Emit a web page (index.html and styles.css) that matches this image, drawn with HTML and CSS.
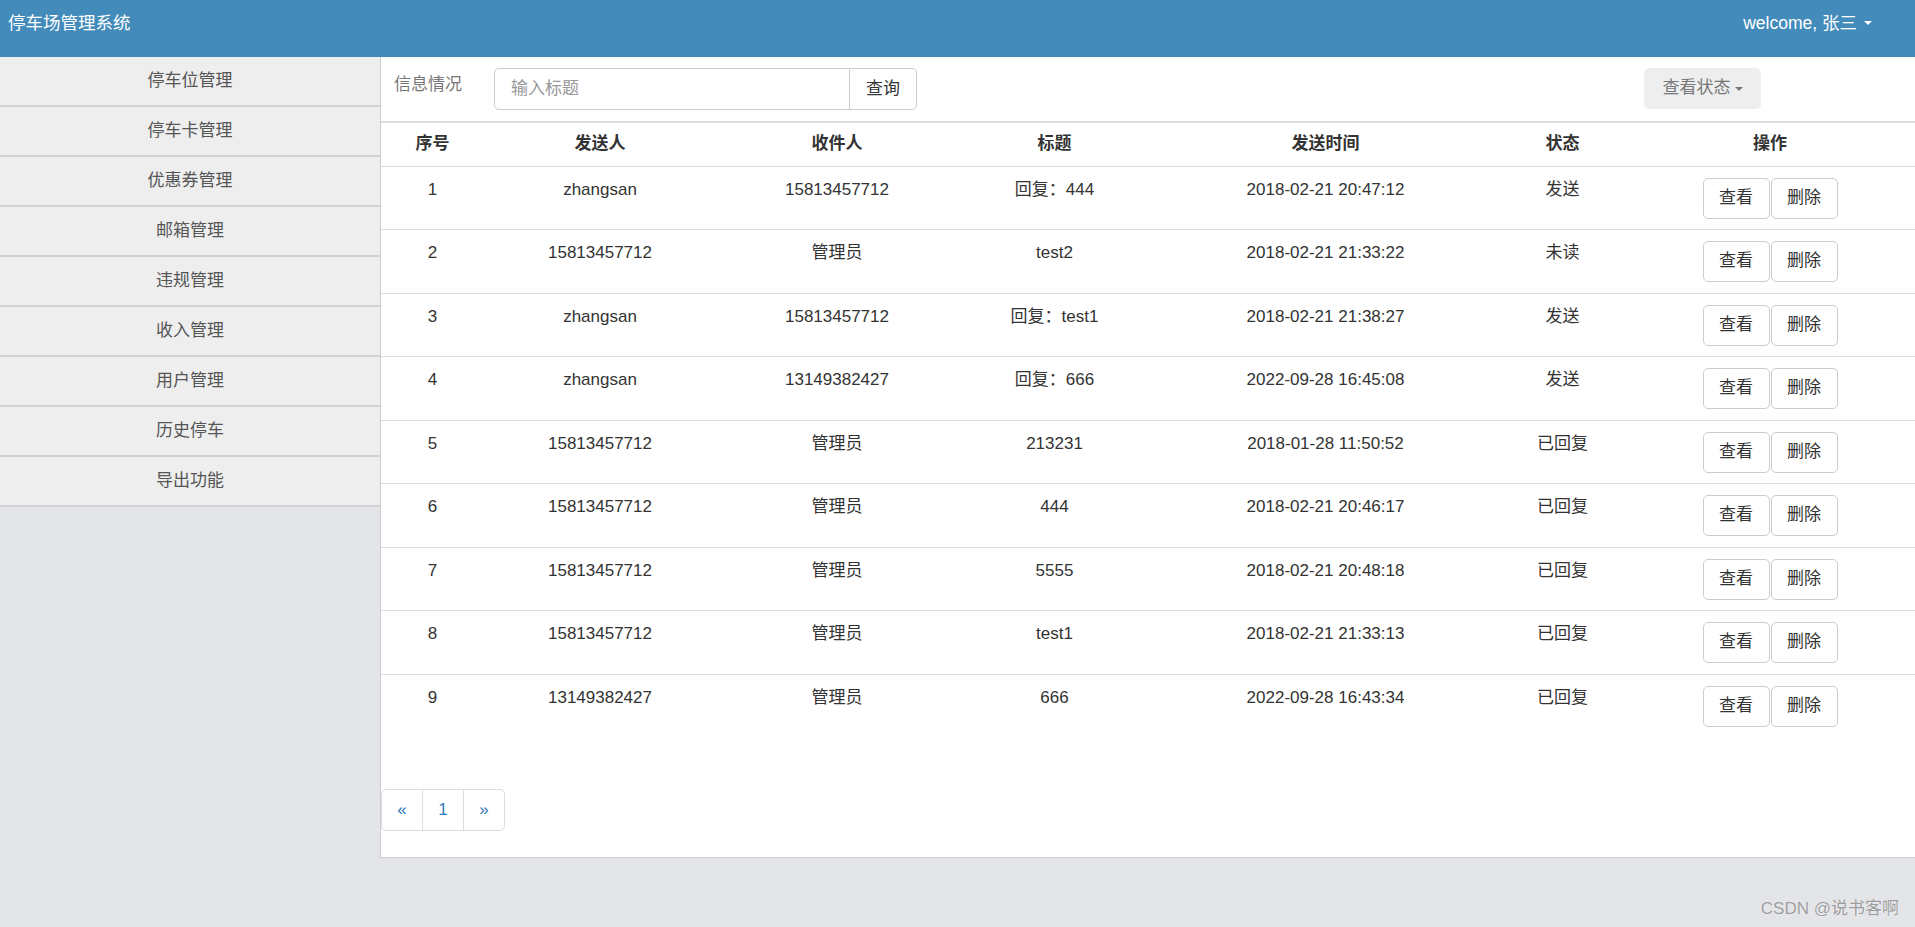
FILE: index.html
```html
<!DOCTYPE html>
<html lang="zh-CN">
<head>
<meta charset="utf-8">
<title>停车场管理系统</title>
<link rel="stylesheet" href="styles.css">
</head>
<body>
<header class="topbar">
  <div class="brand">停车场管理系统</div>
  <div class="user">welcome, 张三 <span class="caret caret-white"></span></div>
</header>
<div class="layout">
  <nav class="sidebar">
    <a class="side-item">停车位管理</a>
    <a class="side-item">停车卡管理</a>
    <a class="side-item">优惠券管理</a>
    <a class="side-item">邮箱管理</a>
    <a class="side-item">违规管理</a>
    <a class="side-item">收入管理</a>
    <a class="side-item">用户管理</a>
    <a class="side-item">历史停车</a>
    <a class="side-item">导出功能</a>
  </nav>
  <main class="panel">
    <div class="toolbar">
      <span class="label">信息情况</span>
      <div class="search">
        <input class="search-input" type="text" placeholder="输入标题">
        <button class="search-btn">查询</button>
      </div>
      <button class="status-btn">查看状态<span class="caret caret-gray"></span></button>
    </div>
    <table class="grid">
      <colgroup>
        <col class="c1"><col class="c2"><col class="c3"><col class="c4"><col class="c5"><col class="c6"><col class="c7">
      </colgroup>
      <thead>
        <tr><th>序号</th><th>发送人</th><th>收件人</th><th>标题</th><th>发送时间</th><th>状态</th><th>操作</th></tr>
      </thead>
      <tbody>
        <tr><td>1</td><td>zhangsan</td><td>15813457712</td><td>回复：444</td><td>2018-02-21 20:47:12</td><td>发送</td><td><div class="ops"><button class="op">查看</button><button class="op">删除</button></div></td></tr>
        <tr><td>2</td><td>15813457712</td><td>管理员</td><td>test2</td><td>2018-02-21 21:33:22</td><td>未读</td><td><div class="ops"><button class="op">查看</button><button class="op">删除</button></div></td></tr>
        <tr><td>3</td><td>zhangsan</td><td>15813457712</td><td>回复：test1</td><td>2018-02-21 21:38:27</td><td>发送</td><td><div class="ops"><button class="op">查看</button><button class="op">删除</button></div></td></tr>
        <tr><td>4</td><td>zhangsan</td><td>13149382427</td><td>回复：666</td><td>2022-09-28 16:45:08</td><td>发送</td><td><div class="ops"><button class="op">查看</button><button class="op">删除</button></div></td></tr>
        <tr><td>5</td><td>15813457712</td><td>管理员</td><td>213231</td><td>2018-01-28 11:50:52</td><td>已回复</td><td><div class="ops"><button class="op">查看</button><button class="op">删除</button></div></td></tr>
        <tr><td>6</td><td>15813457712</td><td>管理员</td><td>444</td><td>2018-02-21 20:46:17</td><td>已回复</td><td><div class="ops"><button class="op">查看</button><button class="op">删除</button></div></td></tr>
        <tr><td>7</td><td>15813457712</td><td>管理员</td><td>5555</td><td>2018-02-21 20:48:18</td><td>已回复</td><td><div class="ops"><button class="op">查看</button><button class="op">删除</button></div></td></tr>
        <tr><td>8</td><td>15813457712</td><td>管理员</td><td>test1</td><td>2018-02-21 21:33:13</td><td>已回复</td><td><div class="ops"><button class="op">查看</button><button class="op">删除</button></div></td></tr>
        <tr><td>9</td><td>13149382427</td><td>管理员</td><td>666</td><td>2022-09-28 16:43:34</td><td>已回复</td><td><div class="ops"><button class="op">查看</button><button class="op">删除</button></div></td></tr>
      </tbody>
    </table>
    <div class="pager-wrap">
      <ul class="pager">
        <li class="page">&laquo;</li>
        <li class="page">1</li>
        <li class="page">&raquo;</li>
      </ul>
    </div>
  </main>
</div>
<div class="watermark">CSDN @说书客啊</div>
</body>
</html>
```
FILE: styles.css
```css
* { box-sizing: border-box; }
html, body { margin: 0; padding: 0; }
body {
  background: #e4e5e9;
  font-family: "Liberation Sans", "Noto Sans CJK SC", sans-serif;
  font-size: 17px;
  line-height: 24.3px;
  color: #333;
  height: 927px;
  overflow: hidden;
  position: relative;
}
.topbar {
  height: 57px;
  background: #428bba;
  color: #fff;
  display: flex;
  justify-content: space-between;
  align-items: flex-start;
}
.brand {
  font-size: 17.5px;
  padding: 11px 0 0 8px;
  line-height: 24px;
}
.user {
  font-size: 17.5px;
  padding: 11px 43px 0 0;
  line-height: 24px;
  display: flex;
  align-items: center;
  gap: 7px;
}
.caret {
  display: inline-block;
  width: 0;
  height: 0;
  border-left: 4.5px solid transparent;
  border-right: 4.5px solid transparent;
  border-top: 4.5px solid #fff;
}
.caret-white { border-top-color: #fff; }
.caret-gray { border-top-color: #777; margin-left: 4px; }

.layout {
  display: flex;
  align-items: flex-start;
}
.sidebar {
  width: 380px;
  flex: none;
  display: flex;
  flex-direction: column;
}
.side-item {
  display: block;
  height: 50px;
  line-height: 48px;
  background: #eee;
  border-bottom: 2px solid #d2d2d2;
  text-align: center;
  color: #555;
}
.panel {
  flex: 1;
  background: #fff;
  border-left: 1px solid #ccc;
  border-bottom: 1px solid #ccc;
}
.toolbar {
  display: flex;
  align-items: flex-start;
  padding: 11px 0 11px 13px;
}
.label {
  color: #777;
  margin-top: 5px;
  width: 68px;
  margin-right: 32px;
}
.search {
  display: flex;
}
.search-input {
  width: 356px;
  height: 42px;
  border: 1px solid #ccc;
  border-radius: 5px 0 0 5px;
  padding: 0 16px;
  font: inherit;
  color: #555;
  outline: none;
}
.search-input::placeholder { color: #999; }
.search-btn {
  width: 67px;
  height: 42px;
  border: 1px solid #ccc;
  border-left: none;
  border-radius: 0 5px 5px 0;
  background: #fff;
  font: inherit;
  color: #333;
  padding: 0;
}
.status-btn {
  margin-left: auto;
  margin-right: 154px;
  height: 41px;
  width: 117px;
  border: none;
  border-radius: 5px;
  background: #eee;
  color: #777;
  font: inherit;
  display: flex;
  align-items: center;
  justify-content: center;
  padding: 0;
}
.grid {
  width: 100%;
  table-layout: fixed;
  border-collapse: collapse;
  border-top: 2px solid #ddd;
}
.c1 { width: 103px; }
.c2 { width: 232px; }
.c3 { width: 242px; }
.c4 { width: 193px; }
.c5 { width: 349px; }
.c6 { width: 125px; }
.c7 { width: 290px; }
.grid th {
  height: 44px;
  padding: 0 8px;
  font-weight: bold;
  text-align: center;
  border-bottom: 1px solid #ddd;
  vertical-align: middle;
}
.grid td {
  padding: 11px 8px 10.5px;
  height: 62.5px;
  text-align: center;
  vertical-align: top;
}
.grid tbody tr + tr td { border-top: 1px solid #ddd; }
.ops {
  display: flex;
  justify-content: center;
  gap: 1px;
}
.op {
  height: 41px;
  width: 67px;
  border: 1px solid #ccc;
  border-radius: 5px;
  background: #fff;
  color: #333;
  font: inherit;
  padding: 0;
}
.pager-wrap {
  padding: 51.5px 0 26px;
}
.pager {
  list-style: none;
  margin: 0;
  padding: 0;
  display: flex;
}
.page {
  width: 42px;
  height: 42px;
  line-height: 40px;
  text-align: center;
  color: #337ab7;
  border: 1px solid #ddd;
  margin-left: -1px;
}
.page:first-child { margin-left: 0; border-radius: 5px 0 0 5px; }
.page:last-child { border-radius: 0 5px 5px 0; }
.watermark {
  position: absolute;
  right: 16px;
  bottom: 6px;
  color: #9c9c9c;
  text-shadow: 0 0 1px #fff;
  font-size: 17px;
}
```
